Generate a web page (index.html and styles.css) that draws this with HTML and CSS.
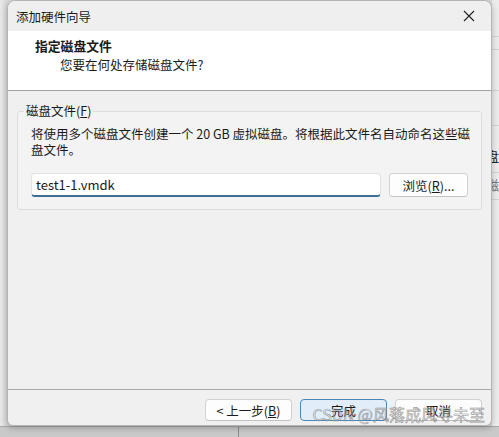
FILE: index.html
```html
<!DOCTYPE html>
<html lang="zh-CN">
<head>
<meta charset="utf-8">
<title>添加硬件向导</title>
<link rel="stylesheet" href="styles.css">
</head>
<body>
<div class="desk">
  <div class="left-gap"></div>
  <div class="dialog">
    <div class="titlebar">
      <span class="title">添加硬件向导</span>
      <svg class="close" width="12" height="12" viewBox="0 0 12 12"><path d="M1 1L11 11M11 1L1 11" stroke="#222" stroke-width="1.1" fill="none"/></svg>
    </div>
    <div class="header">
      <div class="h-title">指定磁盘文件</div>
      <div class="h-sub">您要在何处存储磁盘文件?</div>
    </div>
    <div class="content">
      <fieldset class="group">
        <legend>磁盘文件(<u>F</u>)</legend>
        <p class="desc">将使用多个磁盘文件创建一个 20 GB 虚拟磁盘。将根据此文件名自动命名这些磁盘文件。</p>
        <div class="file-row">
          <div class="input">test1-1.vmdk</div>
          <div class="btn browse">浏览(<u>R</u>)...</div>
        </div>
      </fieldset>
    </div>
    <div class="footer">
      <div class="btn">&lt; 上一步(<u>B</u>)</div>
      <div class="btn primary">完成</div>
      <div class="btn">取消</div>
    </div>
    <div class="watermark">CSDN @风落成风寻未至</div>
  </div>
  <div class="right-strip">
    <div class="rs-line r1"></div>
    <div class="rs-line r2"></div>
    <div class="rs-line r3"></div>
    <div class="rs-line r4"></div>
    <div class="rs-text t1">盘</div>
    <div class="rs-line r5"></div>
    <div class="rs-text t2">磁</div>
    <div class="rs-line r6"></div>
  </div>
</div>
<div class="bottom-strip">
  <div class="bs-left"></div>
</div>
</body>
</html>
```
FILE: styles.css
```css
html, body {
  margin: 0;
  padding: 0;
}
body {
  width: 499px;
  height: 437px;
  overflow: hidden;
  background: #d9d9d9;
  font-family: "Noto Sans CJK SC", "Noto Sans", sans-serif;
  font-size: 12.5px;
  color: #1a1a1a;
}
.desk {
  display: flex;
  height: 426px;
}
.left-gap {
  width: 7px;
  background: linear-gradient(to right, #e9e9e9, #d8d8d8);
}
.dialog {
  position: relative;
  width: 483px;
  border: 1px solid #b4b4b4;
  border-radius: 8px 8px 6px 6px;
  background: #f0f0f0;
  box-shadow: 0 2px 6px rgba(0,0,0,0.25);
  display: flex;
  flex-direction: column;
  overflow: hidden;
  z-index: 1;
}
.titlebar {
  height: 30px;
  flex: none;
  background: #efefef;
  display: flex;
  align-items: center;
  justify-content: space-between;
  padding: 0 16px 0 8px;
}
.title {
  font-size: 12.5px;
  color: #1b1b1b;
}
.close {
  display: block;
}
.header {
  height: 60px;
  flex: none;
  background: #ffffff;
  border-bottom: 1px solid #a3a3a3;
  padding: 5px 0 0 27px;
  box-sizing: border-box;
}
.h-title {
  font-weight: bold;
  font-size: 12.8px;
  line-height: 19px;
}
.h-sub {
  padding-left: 25px;
  line-height: 19px;
}
.content {
  flex: 1;
  padding: 12px 9px 0 9px;
}
.group {
  margin: 0;
  border: 1px solid #dcdcdc;
  border-radius: 3px;
  background: #f3f3f3;
  padding: 0 0 12px 13px;
}
.group legend {
  padding: 0 2px;
  margin-left: -7px;
  line-height: 16px;
}
.desc {
  margin: 7px 0 0 0;
  width: 444px;
  line-height: 16px;
}
.file-row {
  display: flex;
  gap: 8px;
  margin-top: 15px;
}
.input {
  width: 350px;
  height: 24px;
  box-sizing: border-box;
  background: #ffffff;
  border: 1px solid #e2e2e2;
  border-bottom: 2px solid #3b6f94;
  border-radius: 4px;
  padding: 1px 0 0 4px;
  line-height: 19px;
  font-size: 13px;
}
.btn {
  height: 22px;
  box-sizing: border-box;
  background: #fdfdfd;
  border: 1px solid #d2d2d2;
  border-bottom-color: #c2c2c2;
  border-radius: 4px;
  display: flex;
  align-items: center;
  justify-content: center;
  width: 87px;
}
.browse {
  width: 79px;
  height: 24px;
}
.footer {
  border-top: 1px solid #a8a8a8;
  height: 36px;
  flex: none;
  box-sizing: border-box;
  display: flex;
  justify-content: flex-end;
  gap: 8px;
  padding: 9px 9px 0 0;
}
.primary {
  background: #e1eef9;
  border: 1px solid #4b86b8;
}
.watermark {
  position: absolute;
  right: 6px;
  bottom: -1px;
  font-size: 16px;
  color: rgba(255,255,255,0.25);
  -webkit-text-stroke: 0.6px rgba(120,120,120,0.8);
  white-space: nowrap;
}
.right-strip {
  flex: 1;
  background: #ececec;
  overflow: hidden;
}
.rs-line {
  height: 1px;
  background: #d4d4d4;
}
.r1 { margin-top: 36px; }
.r2 { margin-top: 12px; }
.r3 { margin-top: 40px; }
.r4 { margin-top: 34px; }
.rs-text {
  font-size: 13px;
  line-height: 16px;
  margin-left: -6px;
  color: #222;
}
.t1 { margin-top: 22px; }
.r5 { margin-top: 8px; }
.t2 { margin-top: 4px; color: #777; }
.r6 { margin-top: 6px; }
.bottom-strip {
  height: 11px;
  box-sizing: border-box;
  background: #c9c9c9;
  border-top: 1px solid #a9a9a9;
  display: flex;
}
.bs-left {
  width: 238px;
  border-right: 1px solid #8c8c8c;
}
```
